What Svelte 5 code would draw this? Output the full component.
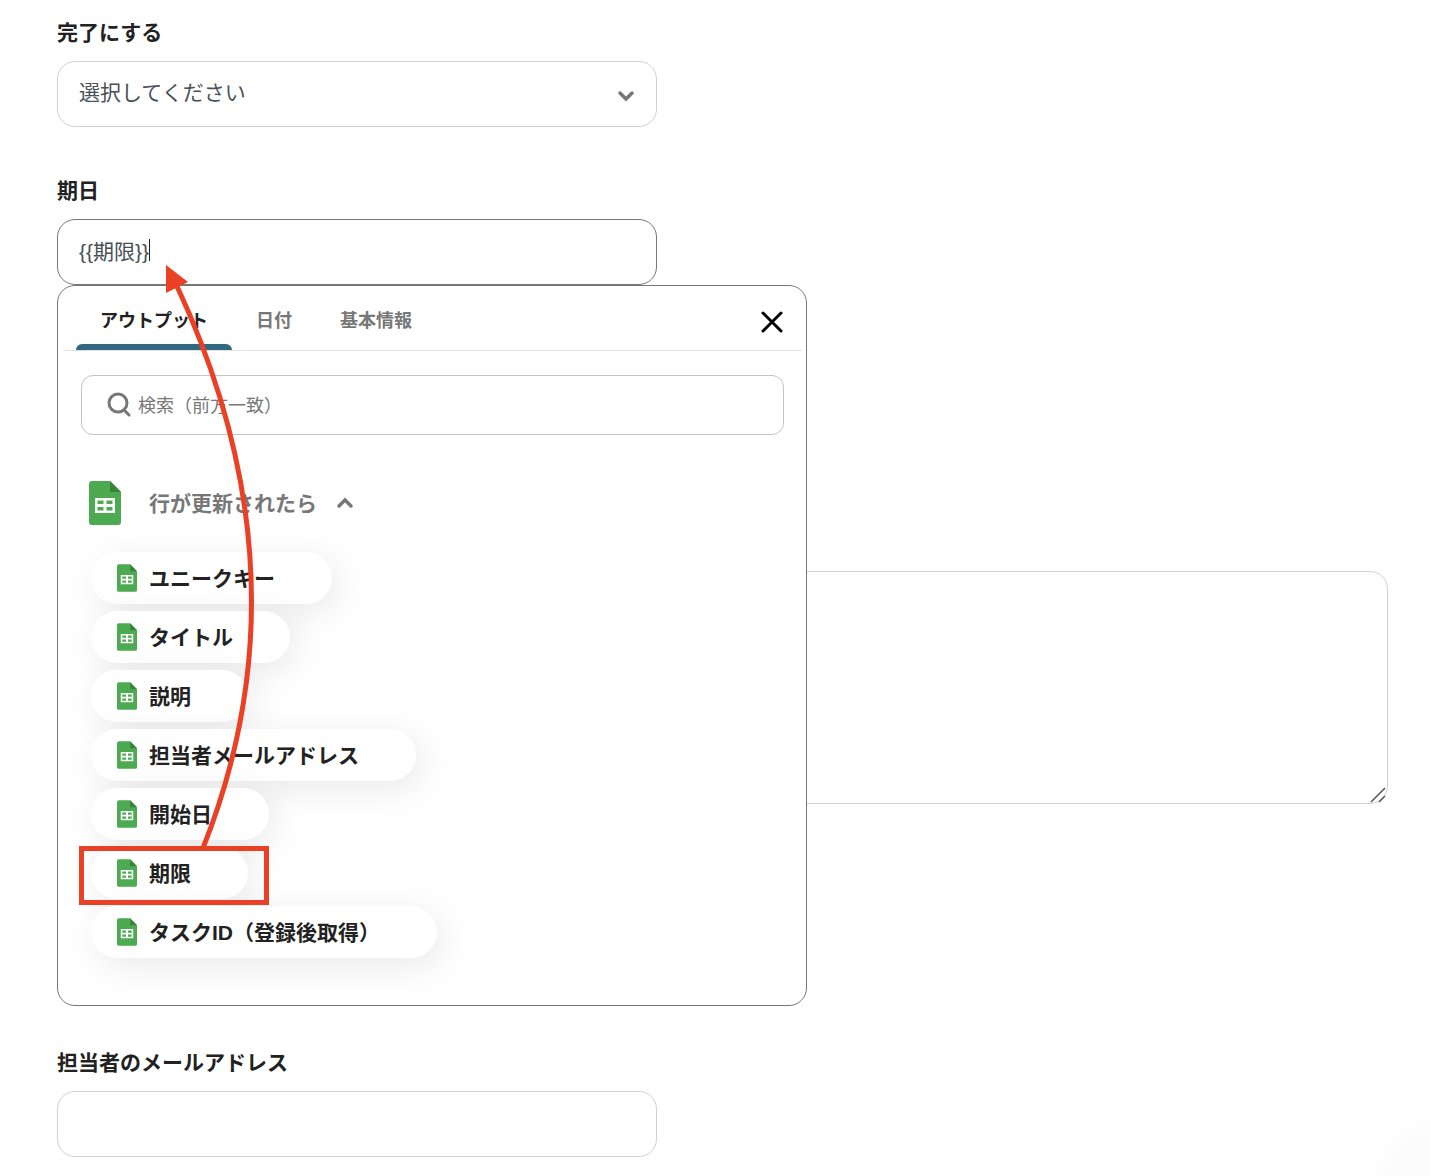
<script lang="ts">
  let status = $state("");
  let dueDate = $state("{{期限}}");
  let description = $state("");
  let email = $state("");
  let keyword = $state("");
  let activeTab = $state("アウトプット");
  let isPickerOpen = $state(true);
  let isGroupOpen = $state(true);

  const tabs = ["アウトプット", "日付", "基本情報"];
  const outputs = [
    "ユニークキー",
    "タイトル",
    "説明",
    "担当者メールアドレス",
    "開始日",
    "期限",
    "タスクID（登録後取得）",
  ];

  let visibleOutputs = $derived(outputs.filter((o) => o.startsWith(keyword)));
</script>

{#snippet sheetIcon()}
  <svg class="sheet-icon" viewBox="0 0 32 44" aria-hidden="true">
    <path
      d="M3 0H21L32 11V41a3 3 0 0 1-3 3H3a3 3 0 0 1-3-3V3a3 3 0 0 1 3-3z"
      fill="#4caa51"
    />
    <path d="M21 0L32 11H21z" fill="#38823c" />
    <path
      d="M6 17H26V32H6zM8.500 19.500V23H14.500V19.500zM17.500 19.500V23H23.500V19.500zM8.500 26V29.500H14.500V26zM17.500 26V29.500H23.500V26z"
      fill="#fff"
      fill-rule="evenodd"
    />
  </svg>
{/snippet}

<main class="form">
  <div class="field">
    <label class="label" for="status">完了にする</label>
    <div class="select-wrap">
      <select id="status" class="box" bind:value={status}>
        <option value="">選択してください</option>
      </select>
      <svg class="select-arrow" viewBox="0 0 18 12" aria-hidden="true">
        <path d="M3 3L9 9L15 3" />
      </svg>
    </div>
  </div>

  <div class="field field-due">
    <label class="label" for="due">期日</label>
    <div class="box box-active">
      <input id="due" class="due-input" type="text" bind:value={dueDate} />
      <span class="caret"></span>
    </div>

    {#if isPickerOpen}
      <div class="picker">
        <div class="picker-head">
          <div class="tabs" role="tablist">
            {#each tabs as tab}
              <button
                type="button"
                role="tab"
                class="tab"
                class:active={tab === activeTab}
                aria-selected={tab === activeTab}
                onclick={() => (activeTab = tab)}>{tab}</button
              >
            {/each}
          </div>
          <button
            type="button"
            class="close"
            aria-label="閉じる"
            onclick={() => (isPickerOpen = false)}
          >
            <svg viewBox="0 0 24 24" aria-hidden="true">
              <path d="M3 3L21 21M21 3L3 21" />
            </svg>
          </button>
        </div>

        <label class="search">
          <svg viewBox="0 0 26 26" aria-hidden="true">
            <circle cx="12" cy="11" r="9" />
            <path d="M18 18L23 23" />
          </svg>
          <input
            type="text"
            placeholder="検索（前方一致）"
            aria-label="検索（前方一致）"
            bind:value={keyword}
          />
        </label>

        <button
          type="button"
          class="group"
          aria-expanded={isGroupOpen}
          onclick={() => (isGroupOpen = !isGroupOpen)}
        >
          {@render sheetIcon()}
          <span class="name">行が更新されたら</span>
          <svg class="group-arrow" viewBox="0 0 18 12" aria-hidden="true">
            <path d="M3 9L9 3L15 9" />
          </svg>
        </button>

        {#if isGroupOpen}
          <ul class="outputs">
            {#each visibleOutputs as output}
              <li>
                <button
                  type="button"
                  class="output"
                  onclick={() => (dueDate = `{{${output}}}`)}
                >
                  {@render sheetIcon()}
                  <span class="name">{output}</span>
                </button>
              </li>
            {/each}
          </ul>
        {/if}
      </div>

      <svg class="guide" viewBox="0 0 750 831" aria-hidden="true">
        <rect x="24.5" y="673.5" width="185" height="54" />
        <path class="line" d="M146 673Q255 400 119 109" />
        <path class="head" d="M109 90L131 107L109 118z" />
      </svg>
    {/if}
  </div>

  <div class="description">
    <textarea class="box" aria-label="説明" bind:value={description}></textarea>
    <svg class="grip" viewBox="0 0 16 16" aria-hidden="true">
      <path d="M1 15L15 1M9 15L15 9" />
    </svg>
  </div>

  <div class="field">
    <label class="label" for="email">担当者のメールアドレス</label>
    <input id="email" class="box" type="email" bind:value={email} />
  </div>
</main>
<div class="corner-shade"></div>

<style>
  :global(body) {
    background: #fff;
  }
  .form,
  .form button,
  .form input,
  .form select,
  .form textarea {
    font-family: "Liberation Sans", "Noto Sans CJK JP", sans-serif;
  }
  .form {
    padding: 17px 42px 19px 57px;
    color: #222;
  }
  button {
    padding: 0;
    border: 0;
    background: none;
    cursor: pointer;
  }
  .field {
    max-width: 600px;
  }
  .label {
    display: block;
    margin-bottom: 12px;
    font-size: 21px;
    font-weight: 700;
    line-height: 32px;
  }
  .box {
    display: block;
    box-sizing: border-box;
    width: 100%;
    height: 66px;
    padding: 0 21px 4px;
    border: 1px solid #ced1d8;
    border-radius: 18px;
    outline: none;
    background: #fff;
    color: #495057;
    font-size: 21px;
  }
  .select-wrap {
    position: relative;
  }
  .select-wrap select {
    appearance: none;
  }
  .select-arrow {
    position: absolute;
    top: 29px;
    right: 22px;
    width: 18px;
    height: 12px;
    pointer-events: none;
  }
  .select-arrow path,
  .group-arrow path {
    fill: none;
    stroke: #777;
    stroke-width: 3.500;
    stroke-linecap: round;
  }

  .field-due {
    position: relative;
    margin-top: 48px;
  }
  .box-active {
    display: flex;
    align-items: center;
    border-color: #777;
  }
  .due-input {
    field-sizing: content;
    max-width: 100%;
    padding: 0;
    border: 0;
    outline: none;
    color: #495057;
    font-size: 21px;
  }
  .caret {
    width: 1px;
    height: 22px;
    background: #222;
  }

  .picker {
    position: absolute;
    top: 100%;
    left: 0;
    z-index: 1;
    box-sizing: border-box;
    width: 750px;
    padding: 0 4px 47px 5px;
    border: 1px solid #777;
    border-radius: 18px;
    background: #fff;
  }
  .picker-head {
    display: flex;
    justify-content: space-between;
    align-items: center;
    padding: 0 18px 0 13px;
    border-bottom: 1px solid #e2e2e2;
  }
  .tabs {
    display: flex;
  }
  .tab {
    position: relative;
    height: 64px;
    padding: 2px 24px 0;
    color: #777;
    font-size: 18px;
    font-weight: 700;
  }
  .tab.active {
    color: #222;
  }
  .tab.active::after {
    content: "";
    position: absolute;
    right: 0;
    bottom: 0;
    left: 0;
    height: 6px;
    border-radius: 6px 6px 0 0;
    background: #2f6880;
  }
  .close {
    width: 24px;
    height: 24px;
    margin-top: 8px;
  }
  .close svg {
    display: block;
    fill: none;
    stroke: #000;
    stroke-width: 3;
    stroke-linecap: round;
  }

  .search {
    display: flex;
    align-items: center;
    gap: 6px;
    box-sizing: border-box;
    height: 60px;
    margin: 24px 18px 0;
    padding: 0 24px;
    border: 1px solid #c4c4c4;
    border-radius: 12px;
  }
  .search svg {
    flex: none;
    width: 26px;
    height: 26px;
    fill: none;
    stroke: #777;
    stroke-width: 3;
    stroke-linecap: round;
  }
  .search input {
    flex: 1;
    min-width: 0;
    padding: 3px 0 0;
    border: 0;
    outline: none;
    font-size: 18px;
  }
  .search input::placeholder {
    color: #777;
  }

  .name {
    padding-bottom: 3px;
  }
  .group {
    display: flex;
    align-items: center;
    margin: 46px 0 0 26px;
    color: #777;
    font-size: 21px;
    font-weight: 700;
  }
  .group .sheet-icon {
    width: 32px;
    height: 44px;
    margin-right: 28px;
  }
  .group-arrow {
    width: 18px;
    height: 12px;
    margin-left: 19px;
  }

  .outputs {
    display: flex;
    flex-direction: column;
    gap: 7px;
    margin: 27px 0 0 28px;
    padding: 0;
    list-style: none;
  }
  .outputs li {
    display: flex;
  }
  .output {
    display: flex;
    align-items: center;
    gap: 12px;
    height: 52px;
    padding: 0 57px 0 26px;
    border-radius: 26px;
    background: #fff;
    box-shadow: 6px 8px 36px rgba(0, 0, 0, 0.09);
    color: #222;
    font-size: 21px;
    font-weight: 700;
    white-space: nowrap;
  }
  .output .sheet-icon {
    width: 20px;
    height: 28px;
  }

  .guide {
    position: absolute;
    top: 0;
    left: 0;
    z-index: 2;
    width: 750px;
    height: 831px;
    fill: none;
    stroke: #ea4126;
    stroke-width: 5;
    pointer-events: none;
  }
  .guide .head {
    fill: #ea4126;
    stroke: none;
  }

  .description {
    position: relative;
    margin: 286px 0 243px;
  }
  .description textarea {
    height: 233px;
    padding: 18px 21px;
    resize: vertical;
  }
  .description textarea::-webkit-resizer {
    background: transparent;
  }
  .grip {
    position: absolute;
    right: 2px;
    bottom: 1px;
    width: 16px;
    height: 16px;
    fill: none;
    stroke: #555;
    stroke-width: 1.500;
    pointer-events: none;
  }

  .corner-shade {
    position: fixed;
    right: 0;
    bottom: 0;
    width: 80px;
    height: 80px;
    background: radial-gradient(circle at 100% 100%, #fafafa, #fff 80px);
    pointer-events: none;
  }
</style>
